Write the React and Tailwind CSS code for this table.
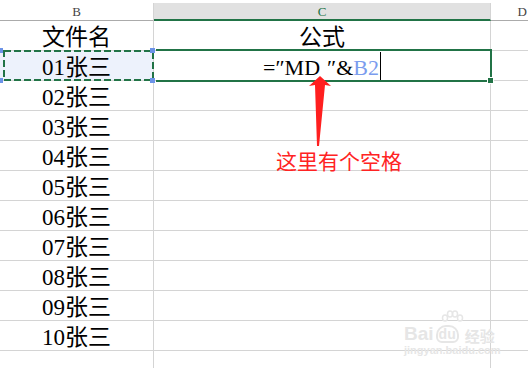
import React from 'react';

const names = ['文件名', '01张三', '02张三', '03张三', '04张三', '05张三', '06张三', '07张三', '08张三', '09张三', '10张三', ''];

const Formula = () => (
  <div className="flex h-full items-end justify-center font-[family-name:Liberation_Serif,Noto_Sans_CJK_SC,serif] text-[22px] leading-none text-black">
    <span className="pb-[1px]">
      =″MD<span className="inline-block w-[7px]" />″&amp;<span className="text-[#7b9cee]">B2</span>
    </span>
    <span className="ml-[1px] h-[28px] w-px bg-black" />
  </div>
);

export default function App() {
  return (
    <div className="relative h-[368px] w-[528px] overflow-hidden bg-white">
      <div className="h-[3px]" />

      {/* column headers */}
      <div className="grid grid-cols-[154px_337px_1fr] font-[family-name:Liberation_Serif,serif] text-[13px] leading-none">
        <div className="flex h-[18px] items-center justify-center border-r border-b border-r-[#d4d4d4] border-b-[#ababab] text-[#444]">B</div>
        <div className="flex h-[18px] items-center justify-center border-r border-b-2 border-r-[#d4d4d4] border-b-[#217346] bg-[#e1e1e1] text-[#217346]">C</div>
        <div className="flex h-[18px] items-center justify-end border-b border-b-[#ababab] pr-[1px] text-[#444]">D</div>
      </div>

      {/* rows */}
      <div className="grid grid-cols-[154px_337px_1fr]">
        {names.map((n, i) => (
          <React.Fragment key={i}>
            <div className={`flex h-[30px] items-end justify-center border-r border-b border-[#d4d4d4] ${i === 1 ? 'bg-[#edf2fc]' : ''} font-[family-name:Liberation_Serif,Noto_Sans_CJK_SC,serif] text-[23px] leading-none text-black`}>
              <span className="pb-[1px]">{n}</span>
            </div>
            <div className="h-[30px] border-r border-b border-[#d4d4d4]">
              {i === 0 && (
                <div className="flex h-full items-end justify-center font-[family-name:Liberation_Serif,Noto_Sans_CJK_SC,serif] text-[23px] leading-none text-black">
                  <span className="pb-[1px]">公式</span>
                </div>
              )}
              {i === 1 && <Formula />}
            </div>
            <div className="h-[30px] border-b border-[#d4d4d4]" />
          </React.Fragment>
        ))}
      </div>

      {/* active cell C2 */}
      <div className="absolute left-[156px] top-[49px] h-[33px] w-[336px] border-y-2 border-r-2 border-[#217346]" />
      <div className="absolute left-[487px] top-[77px] h-[7px] w-[7px] border border-white bg-[#217346]" />

      {/* copy marquee on B2 */}
      <svg className="absolute left-0 top-0" width="160" height="90">
        <rect x="4" y="51" width="149" height="29" fill="none" stroke="#217346" strokeWidth="2" strokeDasharray="7 3" />
        <rect x="-2" y="48" width="5" height="5" fill="#6c93e8" />
        <rect x="150" y="48" width="5" height="5" fill="#6c93e8" />
        <rect x="-2" y="78" width="5" height="5" fill="#6c93e8" />
        <rect x="150" y="78" width="5" height="5" fill="#6c93e8" />
      </svg>

      {/* annotation arrow */}
      <svg className="absolute left-0 top-0" width="528" height="368">
        <polygon points="320,76 331,86 325,85 319,146 317,146 315,85 309,86" fill="#ff1f1f" />
      </svg>
      <div className="absolute left-[276px] top-[150px] font-[family-name:Noto_Sans_CJK_SC,sans-serif] text-[21px] leading-none text-[#ff2323]">
        这里有个空格
      </div>

      {/* watermark */}
      <div className="absolute left-[404px] top-[310px] flex flex-col items-start font-[family-name:Liberation_Sans,sans-serif] text-[#e6e6e6]">
        <svg className="absolute left-[36px] top-0" width="24" height="18" viewBox="0 0 24 18">
          <g fill="none" stroke="#e6e6e6" strokeWidth="1.5">
            <ellipse cx="5" cy="8" rx="2.5" ry="3" />
            <ellipse cx="10" cy="4" rx="2.5" ry="3" />
            <ellipse cx="15" cy="4" rx="2.5" ry="3" />
            <ellipse cx="20" cy="8" rx="2.5" ry="3" />
          </g>
        </svg>
        <div className="mt-[14px] flex items-end gap-[2px] leading-none">
          <span className="text-[19px] font-bold">Bai</span>
          <span className="rounded-t-[10px] rounded-b-[6px] border-2 border-[#e6e6e6] px-[1px] text-[14px] font-bold">du</span>
          <span className="ml-[4px] font-[family-name:Noto_Sans_CJK_SC,sans-serif] text-[15px] font-bold">经验</span>
        </div>
        <span className="mt-[2px] text-[11px] font-bold leading-none">jingyan.baidu.com</span>
      </div>
    </div>
  );
}
